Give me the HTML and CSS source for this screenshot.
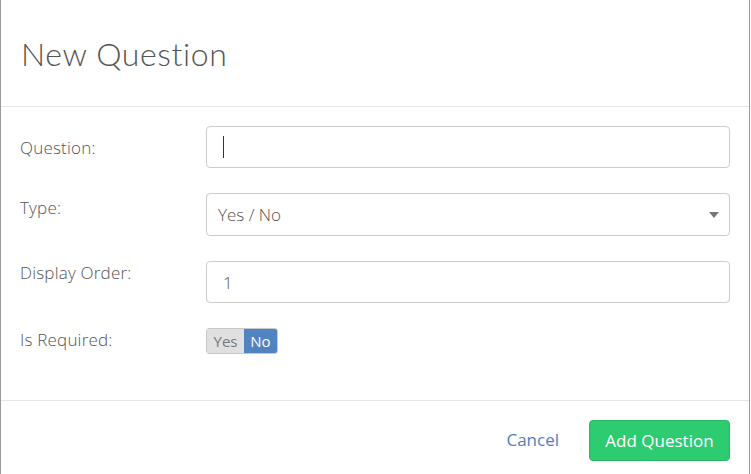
FILE: index.html
```html
<!DOCTYPE html>
<html>
<head>
<meta charset="utf-8">
<link rel="stylesheet" href="styles.css">
</head>
<body>
<div class="modal">
  <div class="modal-header">
    <h1 class="modal-title">New Question</h1>
  </div>
  <div class="modal-body">
    <div class="row row-first">
      <label class="label">Question:</label>
      <div class="control input"><span class="caret-line"></span></div>
    </div>
    <div class="row">
      <label class="label label-type">Type:</label>
      <div class="control select">
        <span class="value">Yes / No</span>
        <span class="arrow"></span>
      </div>
    </div>
    <div class="row">
      <label class="label label-order">Display Order:</label>
      <div class="control input number"><span class="value">1</span></div>
    </div>
    <div class="row row-toggle">
      <label class="label label-req">Is Required:</label>
      <div class="toggle">
        <span class="opt opt-yes">Yes</span>
        <span class="opt opt-no">No</span>
      </div>
    </div>
  </div>
  <div class="modal-footer">
    <a class="cancel">Cancel</a>
    <button class="btn-add">Add Question</button>
  </div>
</div>
</body>
</html>
```

FILE: styles.css
```css
html, body {
  margin: 0;
  padding: 0;
  background: #ffffff;
}
body {
  font-family: "Open Sans", "Liberation Sans", sans-serif;
  color: #555555;
}
.modal {
  width: 748px;
  height: 474px;
  border-left: 1px solid #9a9a9a;
  border-right: 1px solid #9a9a9a;
  box-sizing: content-box;
  display: flex;
  flex-direction: column;
}
.modal-header {
  height: 107px;
  flex: none;
  border-bottom: 1px solid #e5e5e5;
  box-sizing: border-box;
  padding: 34px 20px 0 20px;
}
.modal-title {
  margin: 0;
  font-family: "Lato", "Open Sans", sans-serif;
  font-weight: 300;
  font-size: 32px;
  line-height: 40px;
  color: #555555;
  letter-spacing: 0.6px;
}
.modal-body {
  height: 294px;
  flex: none;
  box-sizing: border-box;
  padding: 19px 19px 0 19px;
  border-bottom: 1px solid #e5e5e5;
}
.row {
  display: flex;
  align-items: flex-start;
  margin-bottom: 25px;
}
.label {
  width: 186px;
  flex: none;
  font-size: 17px;
  font-weight: 300;
  line-height: 22px;
  color: #555555;
  letter-spacing: 0.2px;
}
.row-first .label { padding-top: 11px; }
.label-type { padding-top: 4px; }
.label-order { padding-top: 1px; }
.label-req { padding-top: 1px; }
.control {
  flex: 1;
  height: 42px;
  border: 1px solid #cccccc;
  border-radius: 4px;
  box-sizing: border-box;
  display: flex;
  align-items: center;
  position: relative;
}
.caret-line {
  display: block;
  width: 1px;
  height: 22px;
  background: #333333;
  margin-left: 16px;
}
.select {
  height: 43px;
  padding-left: 11px;
}
.value {
  font-size: 17px;
  font-weight: 300;
  color: #555555;
}
.number {
  padding-left: 16px;
}
.arrow {
  position: absolute;
  right: 10px;
  top: 18px;
  width: 0;
  height: 0;
  border-left: 5px solid transparent;
  border-right: 5px solid transparent;
  border-top: 6px solid #777777;
}
.row-toggle { margin-top: 2px; }
.toggle {
  display: flex;
  height: 26px;
  border: 1px solid #c8c8c8;
  border-radius: 3px;
  overflow: hidden;
  box-sizing: border-box;
}
.opt {
  font-size: 15px;
  line-height: 24px;
  padding: 0 6px;
}
.opt-yes {
  background: #e0e0e0;
  color: #777777;
  width: 25px;
  text-align: center;
}
.opt-no {
  background: #5084c1;
  color: #ffffff;
  width: 21px;
  text-align: center;
}
.modal-footer {
  display: flex;
  justify-content: flex-end;
  align-items: center;
  padding: 19px 19px 0 20px;
}
.cancel {
  font-size: 17px;
  color: #4e7fbf;
  margin-right: 30px;
  margin-top: -3px;
}
.btn-add {
  font-family: "Open Sans", "Liberation Sans", sans-serif;
  font-size: 17px;
  color: #ffffff;
  background: #2ecc71;
  border: 1px solid #27b865;
  border-radius: 4px;
  height: 41px;
  width: 141px;
  padding: 0;
  line-height: 39px;
}
```
